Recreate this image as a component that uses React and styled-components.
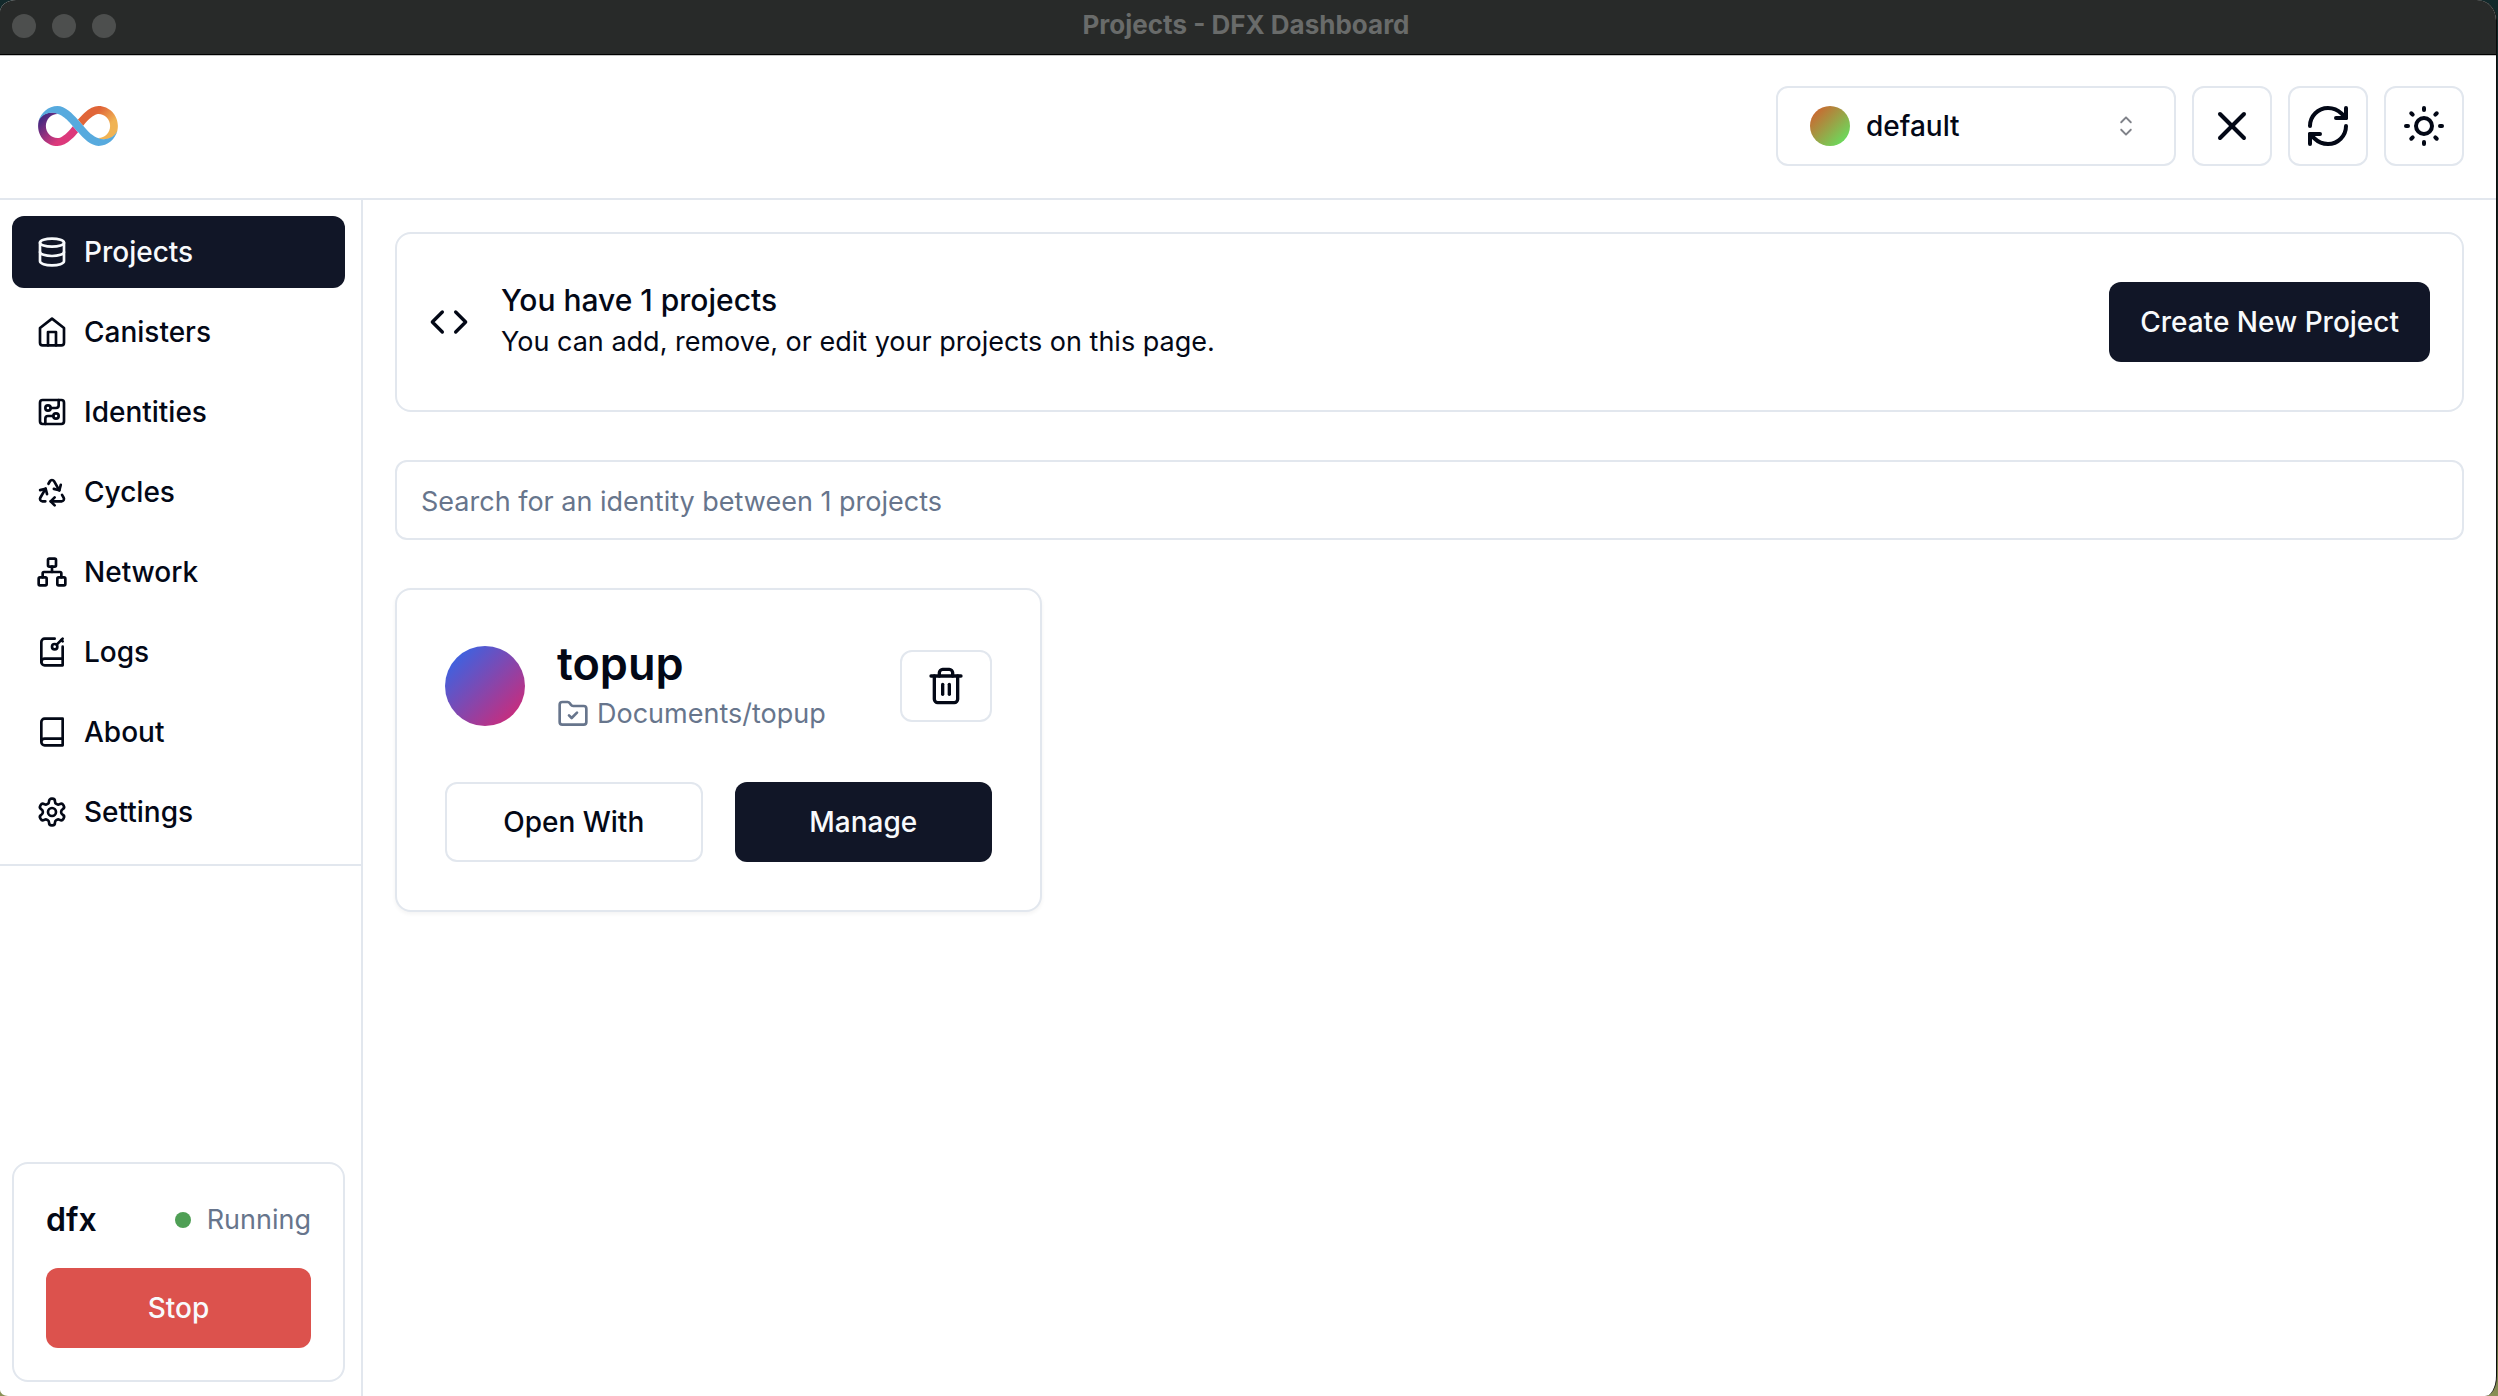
import React from "react";
import styled, { createGlobalStyle, css } from "styled-components";
import {
  CircuitBoard,
  Code,
  Database,
  Network,
  Recycle,
  RefreshCw,
  SunMedium,
  X,
} from "lucide-react";
import { RxCaretSort } from "react-icons/rx";

const color = {
  ink: "#030816",
  navy: "#111627",
  muted: "#67758c",
  line: "#e2e7ee",
  danger: "#dc524d",
  success: "#4f9f55",
  chrome: "#282a29",
};

const GlobalStyle = createGlobalStyle`
  *, *::before, *::after { box-sizing: border-box; }
  body {
    margin: 0;
    background: linear-gradient(#12292b 0%, #14201c 15%, #4c5433 30%, #20281d 60%, #10180f 90%, #8b9155 100%);
    color: ${color.ink};
    font-family: Inter, "Liberation Sans", sans-serif;
    font-size: 27px;
    line-height: 40px;
  }
  h1, h2, p { margin: 0; }
  button, input, select { font: inherit; color: inherit; }
  svg { flex: none; display: block; }
`;

const Window = styled.div`
  display: flex;
  flex-direction: column;
  min-height: 100vh;
  margin-right: 1px;
  border-right: 1px solid #0a0c0c;
  border-radius: 16px 20px 12px 8px / 12px 20px 20px 6px;
  overflow: hidden;
  background: #fff;
`;

const TitleBar = styled.div`
  display: grid;
  grid-template-columns: 1fr auto 1fr;
  align-items: center;
  height: 54px;
  padding: 0 16px 4px 12px;
  background: ${color.chrome};
`;

const Lights = styled.div`
  display: flex;
  gap: 16px;
  padding-top: 2px;
`;

const Light = styled.span`
  width: 24px;
  height: 24px;
  border-radius: 50%;
  background: #4d4f4e;
`;

const WindowTitle = styled.span`
  font-size: 26px;
  line-height: 32px;
  font-weight: 700;
  color: #696b6a;
`;

const Header = styled.header`
  display: flex;
  align-items: center;
  justify-content: space-between;
  padding: 31px 32px 32px 38px;
  border-top: 1px solid #000;
  border-bottom: 2px solid ${color.line};
  box-shadow: inset 0 1px 0 #c4c5c5;
`;

const HeaderActions = styled.div`
  display: flex;
  gap: 16px;
`;

const outlined = css`
  border: 2px solid ${color.line};
  background: #fff;
`;

const controlText = css`
  font-size: 28px;
  font-weight: 500;
`;

const IdentityPicker = styled.label`
  ${outlined}
  display: flex;
  align-items: center;
  gap: 16px;
  width: 400px;
  height: 80px;
  padding: 0 32px;
  border-radius: 12px;

  select {
    ${controlText}
    flex: 1;
    min-width: 0;
    padding: 0;
    border: 0;
    outline: 0;
    appearance: none;
    background: none;
  }
`;

const Caret = styled(RxCaretSort)`
  width: 32px;
  height: 32px;
  opacity: 0.5;
  pointer-events: none;
`;

const Avatar = styled.span`
  flex: none;
  width: ${(p) => p.$size}px;
  height: ${(p) => p.$size}px;
  border-radius: 50%;
  background: linear-gradient(135deg, ${(p) => p.$from} 10%, ${(p) => p.$to} 90%);
`;

const variants = {
  primary: css`
    border: 0;
    background: ${color.navy};
    color: #f8fafc;
  `,
  danger: css`
    border: 0;
    background: ${color.danger};
    color: #f8fafc;
  `,
  outline: outlined,
};

const Button = styled.button`
  ${controlText}
  display: flex;
  align-items: center;
  justify-content: center;
  flex: none;
  height: 80px;
  padding: 0 31px;
  border-radius: 12px;
  ${(p) => variants[p.$variant || "outline"]}
`;

const IconButton = styled(Button)`
  width: 80px;
  padding: 0;
`;

const DeleteButton = styled(Button)`
  height: 72px;
  padding: 0 24px;
`;

const Body = styled.div`
  flex: 1;
  display: flex;
`;

const Sidebar = styled.aside`
  display: flex;
  flex-direction: column;
  justify-content: space-between;
  width: 363px;
  border-right: 2px solid ${color.line};
`;

const Nav = styled.nav`
  display: flex;
  flex-direction: column;
  gap: 8px;
  padding: 16px 16px 16px 12px;
  border-bottom: 2px solid ${color.line};
`;

const NavLink = styled.a`
  ${controlText}
  display: flex;
  align-items: center;
  gap: 16px;
  height: 72px;
  padding: 0 24px;
  border-radius: 12px;
  text-decoration: none;
  color: ${(p) => (p.$active ? "#f8fafc" : color.ink)};
  background: ${(p) => (p.$active ? color.navy : "transparent")};
`;

const SidebarFooter = styled.div`
  padding: 0 16px 14px 12px;
`;

const Panel = styled.section`
  ${outlined}
  border-radius: 16px;
`;

const StatusPanel = styled(Panel)`
  display: flex;
  flex-direction: column;
  gap: 24px;
  padding: 32px;
`;

const StatusRow = styled.div`
  display: flex;
  align-items: center;
  justify-content: space-between;
  height: 48px;
`;

const StatusName = styled.h2`
  font-size: 32px;
  line-height: 48px;
  font-weight: 600;
`;

const Status = styled.span`
  display: flex;
  align-items: center;
  gap: 16px;
  color: ${color.muted};

  &::before {
    content: "";
    width: 16px;
    height: 16px;
    border-radius: 50%;
    background: ${color.success};
  }
`;

const Main = styled.main`
  flex: 1;
  min-width: 0;
  display: flex;
  flex-direction: column;
  gap: 48px;
  padding: 32px;
`;

const Summary = styled(Panel)`
  display: flex;
  align-items: center;
  gap: 32px;
  padding: 48px 32px;
`;

const Stack = styled.div`
  flex: 1;
  min-width: 0;
  display: flex;
  flex-direction: column;
  gap: 4px;
`;

const SummaryTitle = styled.h1`
  font-size: 30px;
  line-height: 36px;
  font-weight: 500;
`;

const Search = styled.input`
  ${outlined}
  width: 100%;
  height: 80px;
  padding: 2px 24px 0;
  border-radius: 12px;
  outline: 0;

  &::placeholder {
    color: ${color.muted};
    opacity: 1;
  }
`;

const ProjectGrid = styled.div`
  display: grid;
  grid-template-columns: repeat(3, 1fr);
  gap: 64px;
`;

const ProjectCard = styled(Panel)`
  display: flex;
  flex-direction: column;
  gap: 48px;
  padding: 48px;
  box-shadow: 0 2px 4px rgba(0, 0, 0, 0.05);
`;

const CardHeader = styled.div`
  display: flex;
  align-items: center;
  gap: 32px;
`;

const CardActions = styled.div`
  display: grid;
  grid-template-columns: 1fr 1fr;
  gap: 32px;
`;

const ProjectName = styled.h2`
  font-size: 45px;
  line-height: 52px;
  font-weight: 600;
`;

const ProjectPath = styled.p`
  display: flex;
  align-items: center;
  gap: 8px;
  color: ${color.muted};
`;

function Glyph({ size = 32, children }) {
  return (
    <svg
      width={size}
      height={size}
      viewBox="0 0 24 24"
      fill="none"
      stroke="currentColor"
      strokeWidth="2"
      strokeLinecap="round"
      strokeLinejoin="round"
      aria-hidden="true"
    >
      {children}
    </svg>
  );
}

const HomeIcon = () => (
  <Glyph>
    <path d="m3 9 9-7 9 7v11a2 2 0 0 1-2 2H5a2 2 0 0 1-2-2z" />
    <path d="M9 22V12h6v10" />
  </Glyph>
);

const BookKeyIcon = () => (
  <Glyph>
    <path d="M4 19.5v-15A2.5 2.5 0 0 1 6.5 2H14" />
    <path d="M20 8v14H6.5a2.5 2.5 0 0 1 0-5H20" />
    <circle cx="14" cy="8" r="2" />
    <path d="m20 2-4.5 4.5" />
    <path d="m19 3 1 1" />
  </Glyph>
);

const BookIcon = () => (
  <Glyph>
    <path d="M4 19.5v-15A2.5 2.5 0 0 1 6.5 2H20v20H6.5a2.5 2.5 0 0 1 0-5H20" />
  </Glyph>
);

const GearIcon = () => (
  <Glyph>
    <path d="M12.22 2h-.44a2 2 0 0 0-2 2v.18a2 2 0 0 1-1 1.73l-.43.25a2 2 0 0 1-2 0l-.15-.08a2 2 0 0 0-2.73.73l-.22.38a2 2 0 0 0 .73 2.73l.15.1a2 2 0 0 1 1 1.72v.51a2 2 0 0 1-1 1.74l-.15.09a2 2 0 0 0-.73 2.73l.22.38a2 2 0 0 0 2.73.73l.15-.08a2 2 0 0 1 2 0l.43.25a2 2 0 0 1 1 1.73V20a2 2 0 0 0 2 2h.44a2 2 0 0 0 2-2v-.18a2 2 0 0 1 1-1.73l.43-.25a2 2 0 0 1 2 0l.15.08a2 2 0 0 0 2.73-.73l.22-.39a2 2 0 0 0-.73-2.73l-.15-.08a2 2 0 0 1-1-1.74v-.5a2 2 0 0 1 1-1.74l.15-.09a2 2 0 0 0 .73-2.73l-.22-.38a2 2 0 0 0-2.73-.73l-.15.08a2 2 0 0 1-2 0l-.43-.25a2 2 0 0 1-1-1.73V4a2 2 0 0 0-2-2z" />
    <circle cx="12" cy="12" r="3" />
  </Glyph>
);

const TrashIcon = () => (
  <Glyph size={40}>
    <path d="M3 6h18" />
    <path d="M19 6v14c0 1-1 2-2 2H7c-1 0-2-1-2-2V6" />
    <path d="M8 6V4c0-1 1-2 2-2h4c1 0 2 1 2 2v2" />
    <path d="M10 11v6" />
    <path d="M14 11v6" />
  </Glyph>
);

const FolderCheckIcon = () => (
  <Glyph>
    <path d="M20 20a2 2 0 0 0 2-2V8a2 2 0 0 0-2-2h-7.9a2 2 0 0 1-1.69-.9L9.6 3.9A2 2 0 0 0 7.93 3H4a2 2 0 0 0-2 2v13a2 2 0 0 0 2 2Z" />
    <path d="m9 13 2 2 4-4" />
  </Glyph>
);

function Logo() {
  return (
    <svg width="80" height="40" viewBox="0 0 358.8 179.8" role="img" aria-label="Internet Computer">
      <defs>
        <linearGradient id="logoWarm" gradientUnits="userSpaceOnUse" x1="224.8" y1="14.2" x2="348" y2="138.5">
          <stop offset="0.21" stopColor="#e06538" />
          <stop offset="0.68" stopColor="#f0b354" />
        </linearGradient>
        <linearGradient id="logoPink" gradientUnits="userSpaceOnUse" x1="133.9" y1="165.6" x2="10.7" y2="41.3">
          <stop offset="0.21" stopColor="#dc397b" />
          <stop offset="0.89" stopColor="#4b2a82" />
        </linearGradient>
      </defs>
      <path
        fill="url(#logoWarm)"
        d="M271.6,0c-20,0-41.9,10.9-65,32.4c-10.9,10.1-20.5,21.1-27.5,29.8c0,0,11.2,12.9,23.5,26.8c6.7-8.4,16.2-19.8,27.3-30.1c20.5-19.2,33.9-23.1,41.6-23.1c28.8,0,52.2,24.2,52.2,54.1c0,29.6-23.4,53.8-52.2,54.1c-1.4,0-3-0.2-5-0.6c8.4,3.9,17.5,6.7,26,6.7c52.8,0,63.2-36.5,63.8-39.1c1.5-6.7,2.4-13.7,2.4-20.9C358.6,40.4,319.6,0,271.6,0z"
      />
      <path
        fill="url(#logoPink)"
        d="M87.1,179.8c20,0,41.9-10.9,65-32.4c10.9-10.1,20.5-21.1,27.5-29.8c0,0-11.2-12.9-23.5-26.8c-6.7,8.4-16.2,19.8-27.3,30.1c-20.5,19-34,23.1-41.6,23.1c-28.8,0-52.2-24.2-52.2-54.1c0-29.6,23.4-53.8,52.2-54.1c1.4,0,3,0.2,5,0.6c-8.4-3.9-17.5-6.7-26-6.7C13.4,29.6,3,66.1,2.4,68.8C0.9,75.5,0,82.5,0,89.7C0,139.4,39,179.8,87.1,179.8z"
      />
      <path
        fill="#57aade"
        d="M127.3,59.7c-5.8-5.6-34-28.5-61-29.3C18.1,29.2,4,64.2,2.7,68.7C12,29.5,46.4,0.2,87.2,0c33.3,0,67,32.7,91.9,62.2c0,0,0.1-0.1,0.1-0.1c0,0,11.2,12.9,23.5,26.8c0,0,14,16.5,28.8,31c5.8,5.6,33.9,28.2,60.9,29c49.5,1.4,63.2-35.6,63.9-38.4c-9.1,39.5-43.6,68.9-84.6,69.1c-33.3,0-67-32.7-92-62.2c0,0.1-0.1,0.1-0.1,0.2c0,0-11.2-12.9-23.5-26.8C156.2,90.8,142.2,74.2,127.3,59.7z"
      />
    </svg>
  );
}

const navItems = [
  { label: "Projects", icon: <Database size={32} />, active: true },
  { label: "Canisters", icon: <HomeIcon /> },
  { label: "Identities", icon: <CircuitBoard size={32} /> },
  { label: "Cycles", icon: <Recycle size={32} /> },
  { label: "Network", icon: <Network size={32} /> },
  { label: "Logs", icon: <BookKeyIcon /> },
  { label: "About", icon: <BookIcon /> },
  { label: "Settings", icon: <GearIcon /> },
];

const projects = [{ name: "topup", path: "Documents/topup", from: "#3864e4", to: "#cc2b7a" }];

export default function App() {
  return (
    <>
      <GlobalStyle />
      <Window>
        <TitleBar>
          <Lights>
            <Light />
            <Light />
            <Light />
          </Lights>
          <WindowTitle>Projects - DFX Dashboard</WindowTitle>
        </TitleBar>

        <Header>
          <Logo />
          <HeaderActions>
            <IdentityPicker>
              <Avatar $size={40} $from="#cd652f" $to="#67df5e" />
              <select aria-label="Identity" defaultValue="default">
                <option value="default">default</option>
              </select>
              <Caret />
            </IdentityPicker>
            <IconButton type="button" aria-label="Close">
              <X size={48} />
            </IconButton>
            <IconButton type="button" aria-label="Refresh">
              <RefreshCw size={48} />
            </IconButton>
            <IconButton type="button" aria-label="Toggle theme">
              <SunMedium size={48} />
            </IconButton>
          </HeaderActions>
        </Header>

        <Body>
          <Sidebar>
            <Nav aria-label="Main">
              {navItems.map((item) => (
                <NavLink
                  key={item.label}
                  href={`#${item.label.toLowerCase()}`}
                  $active={item.active}
                  aria-current={item.active ? "page" : undefined}
                >
                  {item.icon}
                  {item.label}
                </NavLink>
              ))}
            </Nav>
            <SidebarFooter>
              <StatusPanel>
                <StatusRow>
                  <StatusName>dfx</StatusName>
                  <Status>Running</Status>
                </StatusRow>
                <Button type="button" $variant="danger">
                  Stop
                </Button>
              </StatusPanel>
            </SidebarFooter>
          </Sidebar>

          <Main>
            <Summary>
              <Code size={40} />
              <Stack>
                <SummaryTitle>You have {projects.length} projects</SummaryTitle>
                <p>You can add, remove, or edit your projects on this page.</p>
              </Stack>
              <Button type="button" $variant="primary">
                Create New Project
              </Button>
            </Summary>

            <Search
              type="text"
              aria-label="Search projects"
              placeholder={`Search for an identity between ${projects.length} projects`}
            />

            <ProjectGrid>
              {projects.map((project) => (
                <ProjectCard key={project.name}>
                  <CardHeader>
                    <Avatar $size={80} $from={project.from} $to={project.to} />
                    <Stack>
                      <ProjectName>{project.name}</ProjectName>
                      <ProjectPath>
                        <FolderCheckIcon />
                        {project.path}
                      </ProjectPath>
                    </Stack>
                    <DeleteButton type="button" aria-label={`Delete ${project.name}`}>
                      <TrashIcon />
                    </DeleteButton>
                  </CardHeader>
                  <CardActions>
                    <Button type="button">Open With</Button>
                    <Button type="button" $variant="primary">
                      Manage
                    </Button>
                  </CardActions>
                </ProjectCard>
              ))}
            </ProjectGrid>
          </Main>
        </Body>
      </Window>
    </>
  );
}
